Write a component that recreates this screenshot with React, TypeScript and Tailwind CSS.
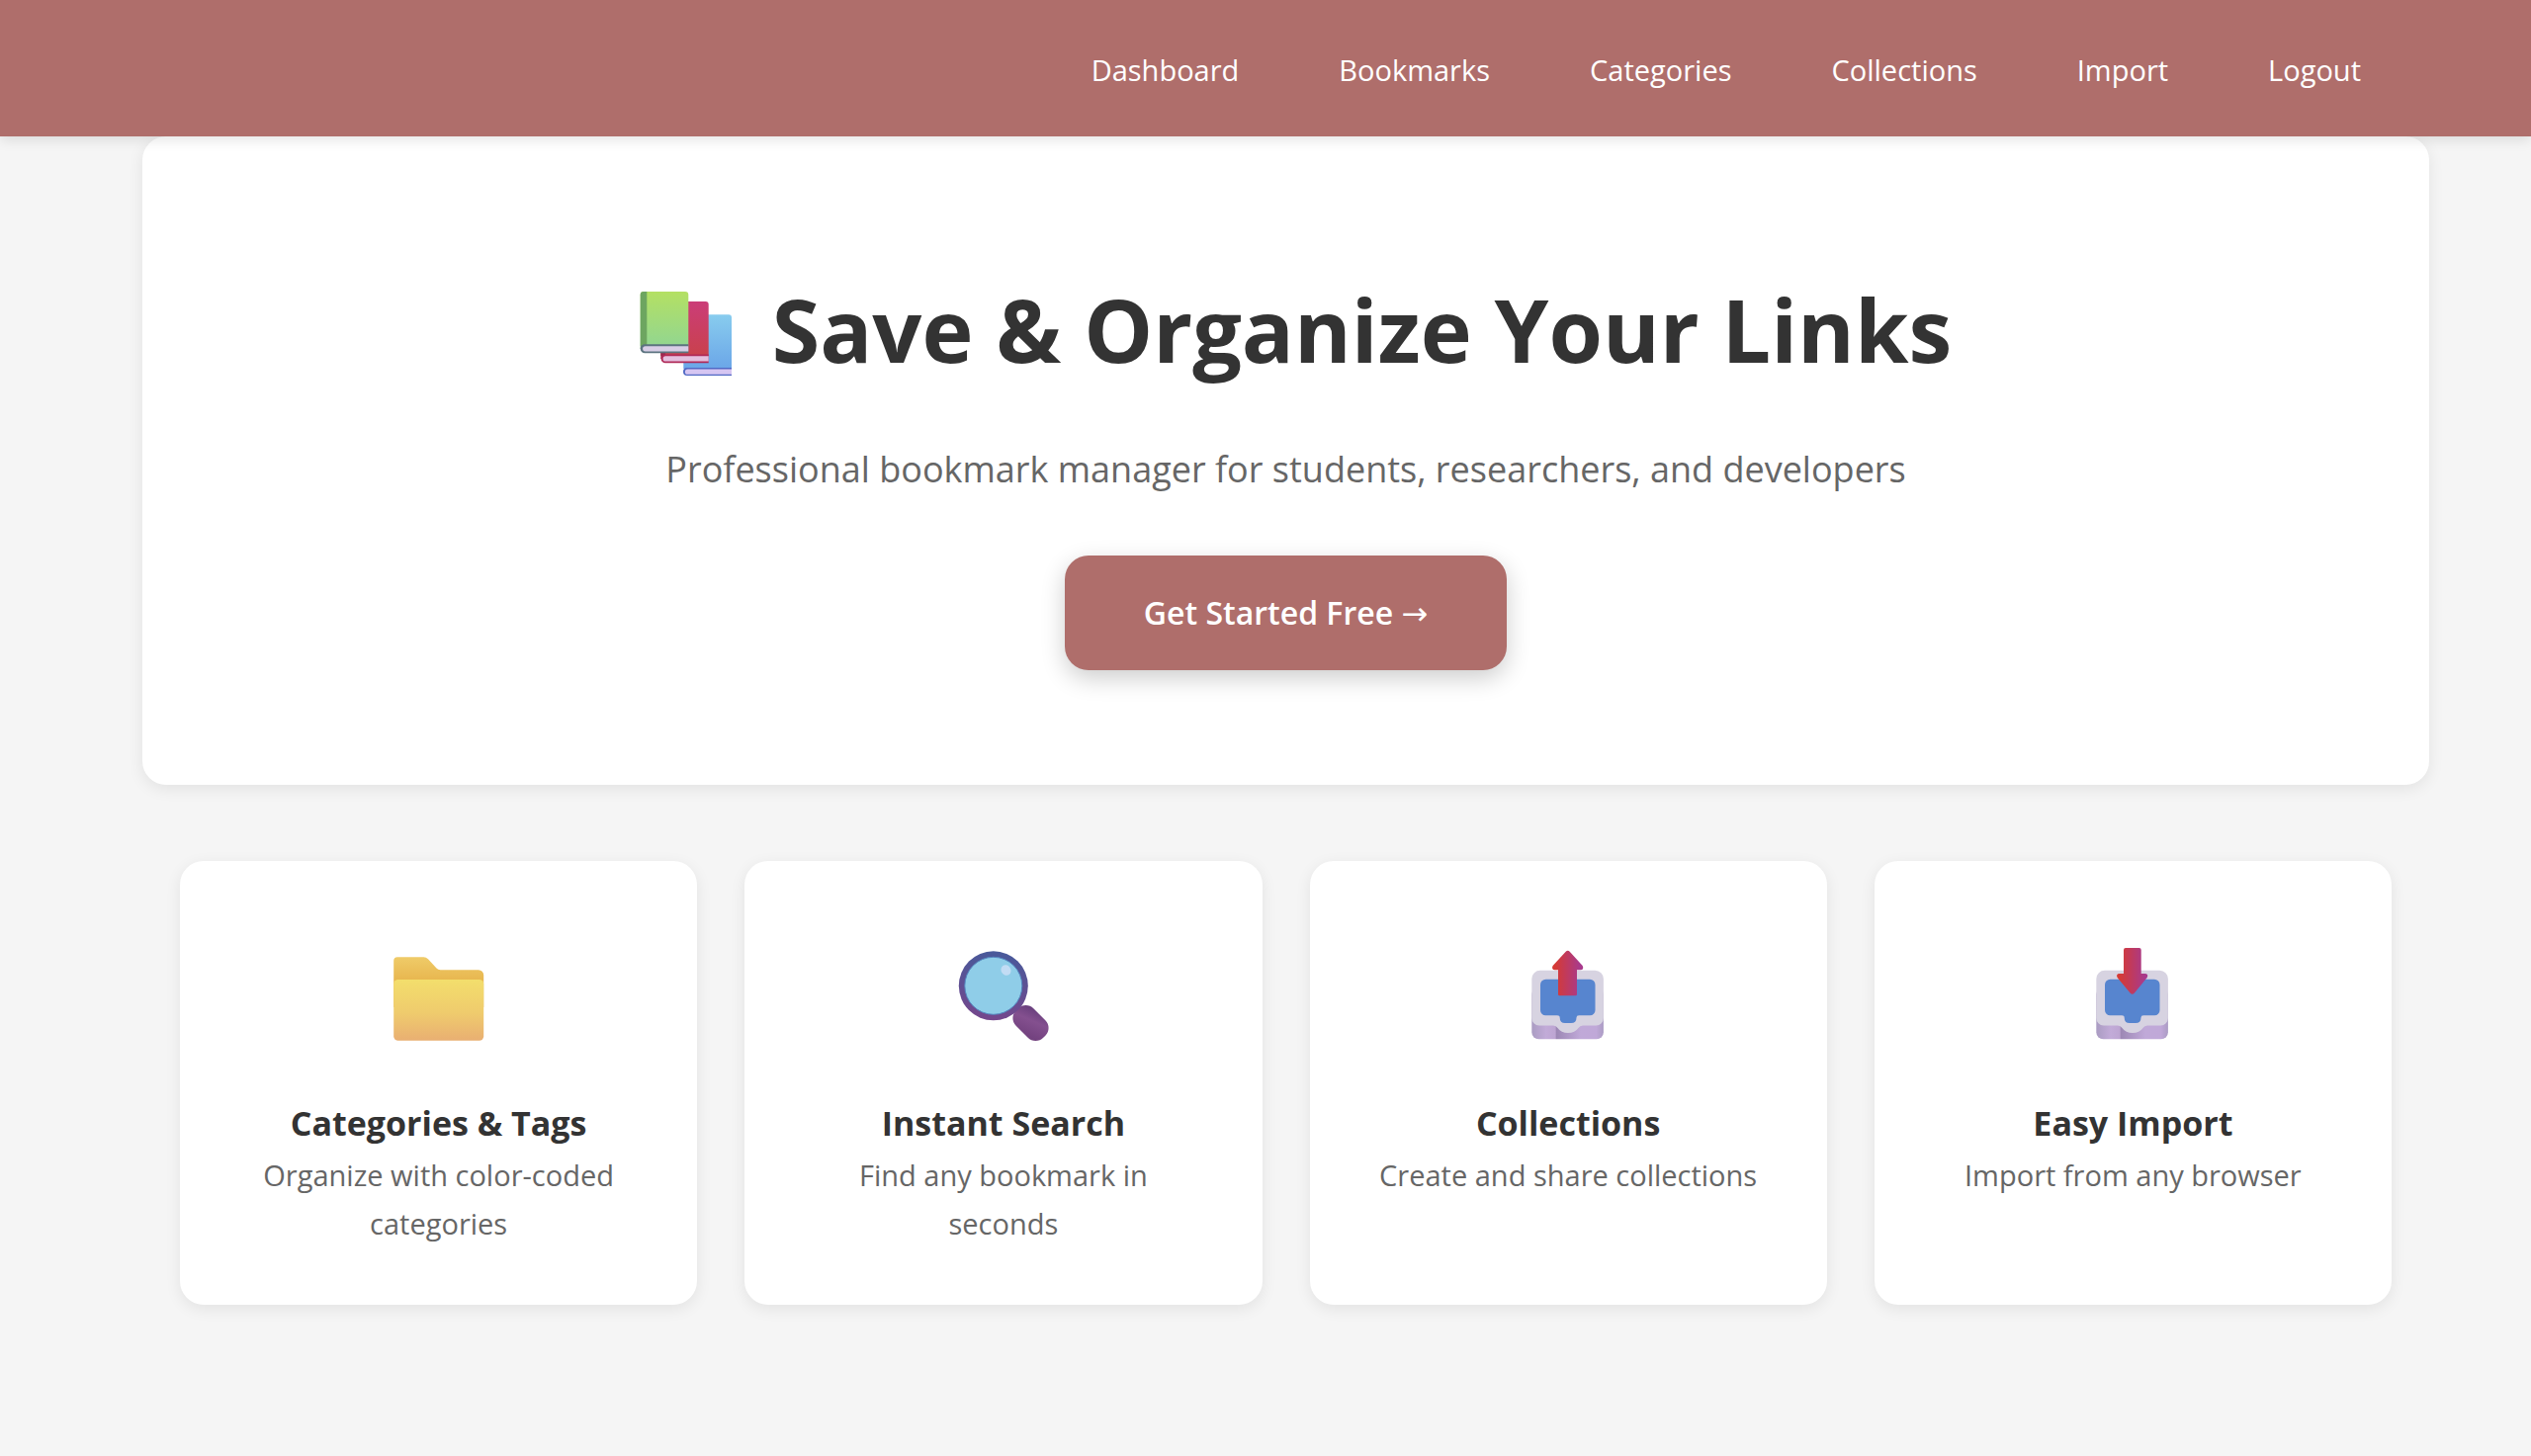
import React from 'react';

const navItems = ['Dashboard', 'Bookmarks', 'Categories', 'Collections', 'Import', 'Logout'];

const BooksIcon: React.FC = () => (
  <svg viewBox="0 -5 126 96" className="w-[126px] h-24 shrink-0" aria-hidden="true">
    <defs>
      <linearGradient id="bookGreen" x1="0" y1="0" x2="0" y2="1">
        <stop offset="0" stopColor="#b4e063" />
        <stop offset="1" stopColor="#92d690" />
      </linearGradient>
      <linearGradient id="bookRed" x1="0" y1="0" x2="0" y2="1">
        <stop offset="0" stopColor="#cb3d78" />
        <stop offset="1" stopColor="#c9414c" />
      </linearGradient>
      <linearGradient id="bookBlue" x1="0" y1="0" x2="0" y2="1">
        <stop offset="0" stopColor="#88ccee" />
        <stop offset="1" stopColor="#6ba6e8" />
      </linearGradient>
    </defs>
    <path d="M64.3 28.3H110a3 3 0 0 1 3 3V83H64.3Z" fill="url(#bookBlue)" />
    <path d="M113 82H68a4 4 0 0 0 0 8H113Z" fill="#5069c4" />
    <path d="M113 83.6H68.5a2.6 2.6 0 0 0 0 5.2H113Z" fill="#d6c6f2" />
    <path d="M41.3 15H86.7a3 3 0 0 1 3 3V70H41.3Z" fill="url(#bookRed)" />
    <path d="M41.3 66V73H46V66Z" fill="#9c2850" />
    <path d="M89.7 68.5H46a4.4 4.4 0 0 0 0 8.8H89.7Z" fill="#b02a58" />
    <path d="M89.7 70.3H46.2a2.6 2.6 0 0 0 0 5.2H89.7Z" fill="#e4bede" />
    <path d="M24 5H66a3.3 3.3 0 0 1 3.3 3.3V60H20.7V8.3A3.3 3.3 0 0 1 24 5Z" fill="url(#bookGreen)" />
    <path d="M24 5H27.3V63H20.7V8.3A3.3 3.3 0 0 1 24 5Z" fill="#6da560" />
    <path d="M69.3 58.3H25.2a4.5 4.5 0 0 0 0 9H69.3Z" fill="#5c7480" />
    <path d="M69.3 60.2H25.7a2.6 2.6 0 0 0 0 5.2H69.3Z" fill="#d8cee6" />
  </svg>
);

const FolderIcon: React.FC = () => (
  <svg viewBox="0 0 96 96" className="size-24" aria-hidden="true">
    <defs>
      <linearGradient id="folderBack" x1="0" y1="0" x2="0" y2="1">
        <stop offset="0" stopColor="#efcb68" />
        <stop offset="0.45" stopColor="#e8b750" />
      </linearGradient>
      <linearGradient id="folderFront" x1="0" y1="0" x2="0" y2="1">
        <stop offset="0" stopColor="#f3de6c" />
        <stop offset="0.55" stopColor="#efcb6d" />
        <stop offset="1" stopColor="#e9af72" />
      </linearGradient>
    </defs>
    <path
      d="M6 9.3H32.5Q35 9.3 37 11.3L45.5 20.5Q47 22.3 49.5 22.3H88a5.2 5.2 0 0 1 5.2 5.2V60H2.2V13.1A3.8 3.8 0 0 1 6 9.3Z"
      fill="url(#folderBack)"
    />
    <rect x="2.2" y="32" width="91" height="61.7" rx="4.5" fill="url(#folderFront)" />
  </svg>
);

const SearchIcon: React.FC = () => (
  <svg viewBox="0 0 96 96" className="size-24" aria-hidden="true">
    <defs>
      <linearGradient id="lensRing" x1="0.5" y1="0" x2="0.4" y2="1">
        <stop offset="0" stopColor="#48599a" />
        <stop offset="1" stopColor="#75478c" />
      </linearGradient>
      <linearGradient id="lensHandle" x1="0" y1="0" x2="0.6" y2="1">
        <stop offset="0" stopColor="#613a78" />
        <stop offset="0.5" stopColor="#84508f" />
        <stop offset="1" stopColor="#73427f" />
      </linearGradient>
    </defs>
    <rect x="56" y="63.5" width="39" height="25" rx="11" transform="rotate(45 75.5 76)" fill="url(#lensHandle)" />
    <circle cx="37.8" cy="38.3" r="35" fill="url(#lensRing)" />
    <circle cx="37.8" cy="38.3" r="29" fill="#8fcde8" stroke="#5488c0" strokeWidth="1" />
    <ellipse cx="50.5" cy="22.5" rx="4.8" ry="5.5" transform="rotate(-35 50.5 22.5)" fill="#c2dcf4" />
  </svg>
);

const TrayIcon: React.FC<{ direction: 'up' | 'down' }> = ({ direction }) => (
  <svg viewBox="0 0 96 96" className="size-24" aria-hidden="true">
    <defs>
      <linearGradient id={`traySide-${direction}`} x1="0" y1="0" x2="1" y2="0">
        <stop offset="0" stopColor="#aa9cc2" />
        <stop offset="0.2" stopColor="#c2abd8" />
        <stop offset="0.33" stopColor="#bda5d2" />
        <stop offset="0.34" stopColor="#9c87b4" />
        <stop offset="0.68" stopColor="#c0a9d8" />
        <stop offset="0.9" stopColor="#c0a8d8" />
        <stop offset="1" stopColor="#ab9cc4" />
      </linearGradient>
      <linearGradient id={`trayArrow-${direction}`} x1="0" y1="0" x2="1" y2="0">
        <stop offset="0.1" stopColor="#d53a35" />
        <stop offset="0.9" stopColor="#a83a8c" />
      </linearGradient>
    </defs>
    <rect x="11.3" y="40" width="72.6" height="52.3" rx="7" fill={`url(#traySide-${direction})`} />
    <path
      d="M20 22.7H75.3a8.6 8.6 0 0 1 8.6 8.6V71a7.5 7.5 0 0 1-7.5 7.5H63Q60 78.5 58.5 81Q55 86 48 86Q41 86 37.5 81Q36 78.5 33 78.5H18.8A7.5 7.5 0 0 1 11.3 71V31.3a8.6 8.6 0 0 1 8.7-8.6Z"
      fill="#d7d3e1"
    />
    <path
      d="M25.5 31.7H70a5.5 5.5 0 0 1 5.5 5.5V63a5.3 5.3 0 0 1-5.3 5.3H59Q56.5 68.3 56.5 70.5Q56.5 76 51 76H45Q39.7 76 39.7 70.5Q39.7 68.3 37 68.3H25.3A5.3 5.3 0 0 1 20 63V37.2a5.5 5.5 0 0 1 5.5-5.5Z"
      fill="#5785cf"
    />
    {direction === 'up' ? (
      <path
        d="M45.7 3.7Q47.7 1.7 49.7 3.7L62.7 18Q64.5 22 60.5 22.3H57V47Q57 48.3 55.5 48.3H39.5Q38 48.3 38 47V22.3H34.8Q30.8 22 32.6 18Z"
        fill={`url(#trayArrow-${direction})`}
      />
    ) : (
      <path
        d="M41 0H54.7a2 2 0 0 1 2 2V26H60.5Q64.5 26.3 62.7 30L50 45.5Q47.7 48 45.5 45.5L32.6 30Q30.8 26.3 34.8 26H39V2a2 2 0 0 1 2-2Z"
        fill={`url(#trayArrow-${direction})`}
      />
    )}
  </svg>
);

const features = [
  { title: 'Categories & Tags', text: 'Organize with color-coded categories', icon: <FolderIcon /> },
  { title: 'Instant Search', text: 'Find any bookmark in seconds', icon: <SearchIcon /> },
  { title: 'Collections', text: 'Create and share collections', icon: <TrayIcon direction="up" /> },
  { title: 'Easy Import', text: 'Import from any browser', icon: <TrayIcon direction="down" /> },
];

const App: React.FC = () => {
  return (
    <div className="min-h-screen bg-[#f5f5f5] font-['Open_Sans','Noto_Sans',sans-serif] text-[#333333]">
      <header className="relative z-10 bg-[#af6e6b] shadow-[0_4px_12px_rgba(0,0,0,0.1)]">
        <nav className="flex justify-end gap-[101px] pt-[46px] pb-[42px] pr-[172px] text-[29px] leading-[50px] text-white">
          {navItems.map((item) => (
            <a key={item} href="#">
              {item}
            </a>
          ))}
        </nav>
      </header>

      <main className="pl-36 pr-[103px] pb-20">
        <section className="flex flex-col items-center rounded-3xl bg-white pt-[135px] pb-[116px] shadow-[0_4px_16px_rgba(0,0,0,0.08)]">
          <h1 className="flex items-center gap-7 text-[88px] leading-[120px] font-bold">
            <BooksIcon />
            Save &amp; Organize Your Links
          </h1>
          <p className="mt-[52px] text-[36px] leading-[60px] text-[#666666]">
            Professional bookmark manager for students, researchers, and developers
          </p>
          <button
            type="button"
            className="mt-[57px] rounded-3xl bg-[#af6e6b] px-20 py-8 text-[32px] leading-[52px] font-semibold text-white shadow-[0_8px_24px_rgba(0,0,0,0.2)]"
          >
            Get Started Free <span className="font-['DejaVu_Sans'] leading-none font-normal">→</span>
          </button>
        </section>

        <section className="mt-[77px] grid grid-cols-4 gap-12 px-[38px]">
          {features.map((feature) => (
            <article
              key={feature.title}
              className="flex flex-col items-center rounded-3xl bg-white px-[60px] pt-[88px] pb-[58px] text-center shadow-[0_4px_16px_rgba(0,0,0,0.08)]"
            >
              {feature.icon}
              <h3 className="mt-[53px] text-[34px] leading-[56px] font-bold">{feature.title}</h3>
              <p className="text-[29px] leading-[49px] text-[#666666]">{feature.text}</p>
            </article>
          ))}
        </section>
      </main>
    </div>
  );
};

export default App;
